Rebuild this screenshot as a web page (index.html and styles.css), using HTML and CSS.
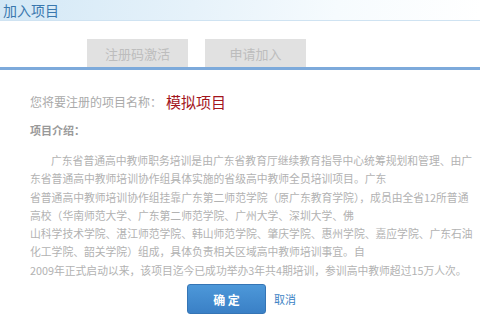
FILE: index.html
```html
<!DOCTYPE html>
<html>
<head>
<meta charset="utf-8">
<link rel="stylesheet" href="styles.css">
</head>
<body>
<div class="page">
  <div class="header"><span class="title">加入项目</span></div>
  <div class="tabs">
    <div class="tab">注册码激活</div>
    <div class="tab">申请加入</div>
  </div>
  <div class="content">
    <div class="name-row"><span class="label">您将要注册的项目名称：</span><span class="pname">模拟项目</span></div>
    <div class="intro-title">项目介绍：</div>
    <div class="intro">
      <div class="first">广东省普通高中教师职务培训是由广东省教育厅继续教育指导中心统筹规划和管理、由广</div>
      <div>东省普通高中教师培训协作组具体实施的省级高中教师全员培训项目。广东</div>
      <div>省普通高中教师培训协作组挂靠广东第二师范学院（原广东教育学院），成员由全省12所普通</div>
      <div>高校（华南师范大学、广东第二师范学院、广州大学、深圳大学、佛</div>
      <div>山科学技术学院、湛江师范学院、韩山师范学院、肇庆学院、惠州学院、嘉应学院、广东石油</div>
      <div>化工学院、韶关学院）组成，具体负责相关区域高中教师培训事宜。自</div>
      <div>2009年正式启动以来，该项目迄今已成功举办3年共4期培训，参训高中教师超过15万人次。</div>
    </div>
    <div class="actions">
      <div class="btn">确&nbsp;定</div>
      <span class="cancel">取消</span>
    </div>
  </div>
</div>
</body>
</html>
```
FILE: styles.css
```css
html, body {
  margin: 0;
  padding: 0;
  background: #fff;
}
body {
  width: 480px;
  height: 320px;
  overflow: hidden;
  font-family: "Noto Sans CJK SC", "Liberation Sans", sans-serif;
}
.page {
  display: flex;
  flex-direction: column;
}
.header {
  height: 20px;
  border-bottom: 1px solid #cfe3f2;
  background: linear-gradient(100deg, #d3e8f6 0%, #e6f2fa 40%, #f6fbfe 70%, #ffffff 100%);
  display: flex;
  align-items: center;
  padding-left: 3px;
}
.title {
  font-size: 14px;
  color: #3a78ae;
  line-height: 20px;
}
.tabs {
  display: flex;
  gap: 17px;
  padding-left: 87px;
  margin-top: 18px;
  border-bottom: 3px solid #7daadb;
}
.tab {
  width: 101px;
  height: 28px;
  background: #e1e1e1;
  color: #bdbdbd;
  font-size: 13px;
  display: flex;
  align-items: center;
  justify-content: center;
}
.content {
  padding-left: 30px;
  padding-right: 4px;
}
.name-row {
  margin-top: 20px;
  height: 22px;
  display: flex;
  align-items: center;
}
.label {
  font-size: 12px;
  color: #aaaaaa;
}
.pname {
  font-size: 15px;
  color: #a3151c;
  margin-left: 4px;
}
.intro-title {
  margin-top: 10px;
  font-size: 11px;
  font-weight: bold;
  color: #999;
  line-height: 16px;
}
.intro {
  margin-top: 13px;
  font-size: 10.8px;
  color: #b2b2b2;
  line-height: 18.3px;
  white-space: nowrap;
}
.first {
  padding-left: 21px;
}
.actions {
  margin-top: 5px;
  display: flex;
  align-items: center;
  padding-left: 157px;
  gap: 8px;
}
.btn {
  width: 79px;
  height: 30px;
  border-radius: 3px;
  background: linear-gradient(#4d98d9, #3a80c6);
  border: 1px solid #3575b5;
  box-sizing: border-box;
  color: #fff;
  font-size: 12px;
  font-weight: bold;
  display: flex;
  align-items: center;
  justify-content: center;
}
.cancel {
  font-size: 11px;
  color: #3b82c4;
}
```
